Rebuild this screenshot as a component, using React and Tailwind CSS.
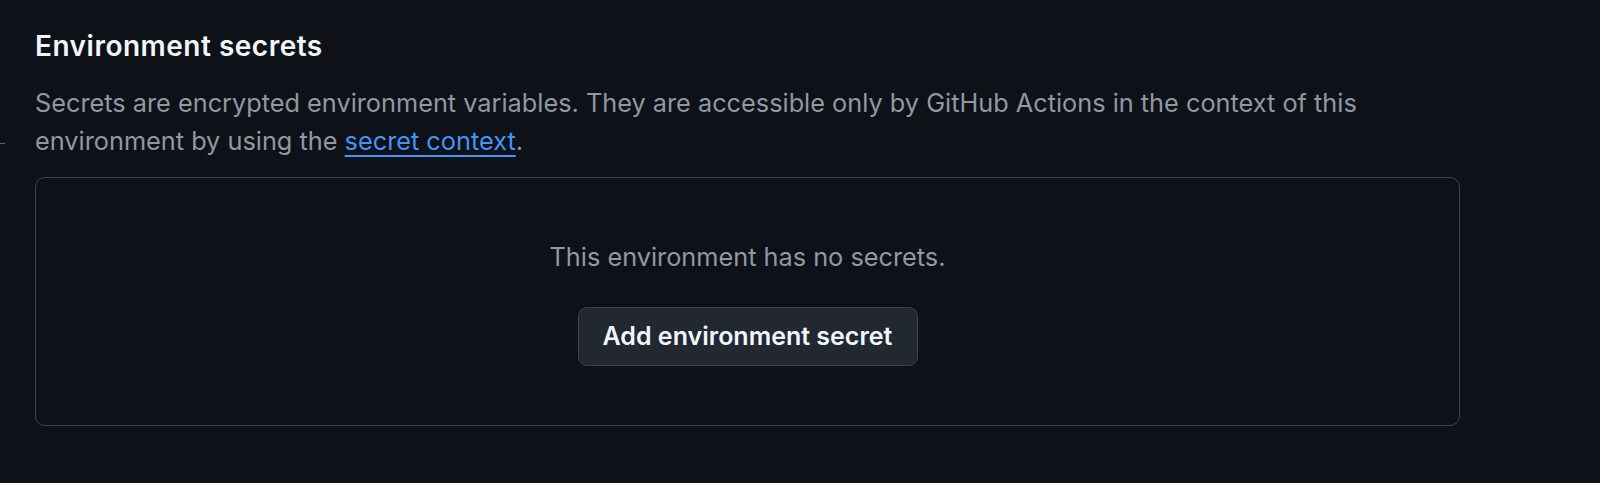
import React from "react";

export default function App() {
  return (
    <div
      className="relative min-h-[483px] w-full bg-[#0e1117] text-[#9198a1]"
      style={{ fontFamily: "Inter, 'Noto Sans', sans-serif" }}
    >
      {/* stray rule from the sidebar edge */}
      <div className="absolute left-0 top-[143px] h-px w-[5px] bg-[#5a6068]" />

      <div className="w-[1460px] pl-[35px] pt-[29px]">
        <h2 className="text-[28px] font-semibold leading-[35px] tracking-[0.5px] text-[#f0f6fc]">
          Environment secrets
        </h2>
        <p className="mt-[20px] text-[25.3px] leading-[38px]">
          Secrets are encrypted environment variables. They are accessible only by GitHub Actions in the context of this
          <br />
          environment by using the{" "}
          <a href="#" className="text-[#4493f8] underline underline-offset-[5px]">
            secret context
          </a>
          .
        </p>

        <div className="mt-[17px] flex h-[249px] flex-col items-center rounded-[10px] border border-[#3d444d] pt-[60px]">
          <p className="text-[25.3px] leading-[38px]">This environment has no secrets.</p>
          <button className="mt-[31px] h-[59px] w-[340px] rounded-[9px] border border-[#3d444d] bg-[#212830] text-[25px] font-semibold text-[#f0f6fc]">
            Add environment secret
          </button>
        </div>
      </div>
    </div>
  );
}
